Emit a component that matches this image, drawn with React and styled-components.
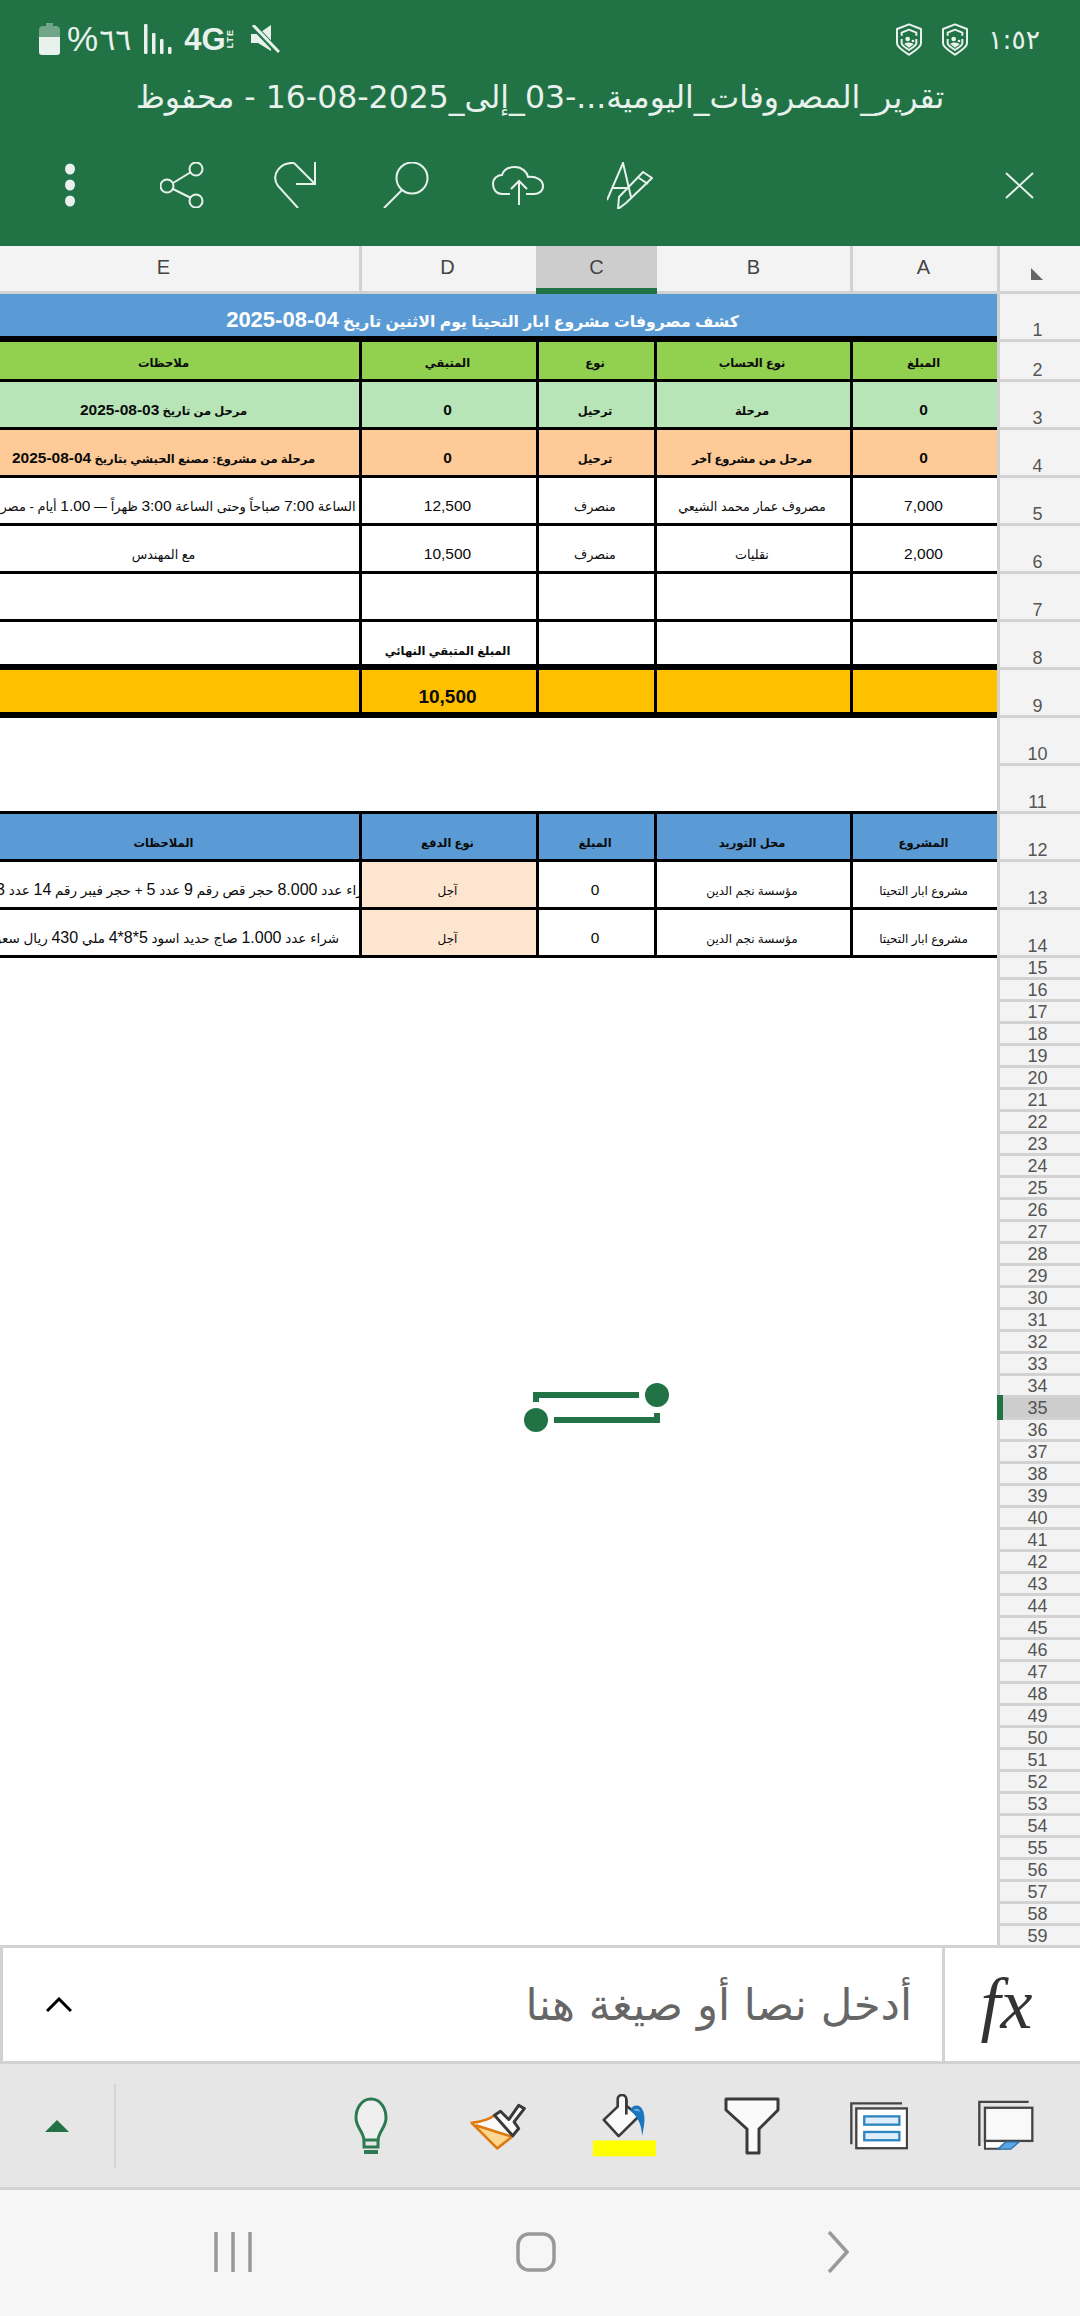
import styled, { createGlobalStyle } from "styled-components";

const GlobalStyle = createGlobalStyle`
  html, body { margin: 0; padding: 0; background: #fff; }
  * { box-sizing: border-box; }
  body { font-family: "Liberation Sans", "DejaVu Sans", sans-serif; }
`;

const GREEN = "#217346";
const LINE = "#d2d2d2";
const ICON = "#e8f1ec";

const Page = styled.div`
  width: 1080px;
  height: 2316px;
  display: flex;
  flex-direction: column;
  overflow: hidden;
  background: #fff;
`;

const Header = styled.header`
  height: 246px;
  flex: none;
  background: ${GREEN};
  color: ${ICON};
`;

const StatusBar = styled.div`
  height: 78px;
  padding: 0 40px 0 39px;
  display: flex;
  align-items: center;
  justify-content: space-between;
`;

const StatusGroup = styled.div`
  display: flex;
  align-items: center;
  gap: ${(p) => p.$gap || 0}px;
`;

const Percent = styled.span`
  font-size: 35px;
  margin-left: 7px;
`;

const ArabicDigits = styled.span`
  font-family: "DejaVu Sans", sans-serif;
  font-size: ${(p) => p.$size}px;
  direction: ltr;
  margin: 0 ${(p) => p.$mr || 0}px 0 ${(p) => p.$ml || 0}px;
`;

const Network = styled.span`
  font-weight: 700;
  font-size: 31px;
  line-height: 1;
  display: inline-flex;
  align-items: center;
  width: 50px;
  margin: 0 16px 0 12px;
`;

const Lte = styled.span`
  font-size: 9px;
  writing-mode: vertical-rl;
  transform: rotate(180deg);
  letter-spacing: 1px;
`;

const Title = styled.div`
  height: 38px;
  line-height: 38px;
  text-align: center;
  font-family: "DejaVu Sans", sans-serif;
  font-size: 31.5px;
  white-space: nowrap;
  direction: rtl;
`;

const Actions = styled.div`
  height: 138px;
  padding: 0 5px 0 14px;
  display: flex;
  align-items: center;
`;

const ActionSlot = styled.div`
  width: 112px;
  display: flex;
  justify-content: center;
  margin-left: ${(p) => (p.$push ? "auto" : "0")};
`;

const ColumnBar = styled.div`
  height: 48px;
  flex: none;
  display: grid;
  grid-template-columns: 391px 177px 121px 193px 147px 83px;
  margin-left: -32px;
  border-bottom: 3px solid ${LINE};
  background: #f3f3f3;
`;

const ColumnHead = styled.div`
  display: flex;
  align-items: center;
  justify-content: center;
  font-size: 20px;
  color: #444;
  height: 48px;
  padding-bottom: ${(p) => (p.$active ? 0 : 5)}px;
  padding-right: ${(p) => (p.$edge ? 3 : 0)}px;
  border-left: ${(p) => (p.$edge ? `3px solid ${LINE}` : "none")};
  background: ${(p) => (p.$active ? "#cdcdcd" : "transparent")};
  border-bottom: ${(p) => (p.$active ? `6px solid ${GREEN}` : "none")};
`;

const Corner = styled(ColumnHead)`
  padding: 8px 6px 0 0;
`;

const SheetArea = styled.div`
  position: relative;
  height: 1651px;
  flex: none;
  display: flex;
  overflow: hidden;
`;

const Viewport = styled.div`
  width: 997px;
  flex: none;
  overflow: hidden;
`;

const SheetGrid = styled.div`
  margin-left: -32px;
  width: 1029px;
`;

const Row = styled.div`
  display: grid;
  grid-template-columns: 391px 177px 118px 196px 147px;
  height: ${(p) => p.$h}px;
  border-bottom: ${(p) => p.$line}px solid #000;
  background: ${(p) => p.$bg || "#fff"};
`;

const Cell = styled.div`
  display: flex;
  align-items: flex-end;
  justify-content: center;
  padding-bottom: ${(p) => p.$pb || 7}px;
  padding-right: ${(p) => (p.$first ? 0 : 3)}px;
  overflow: hidden;
  white-space: nowrap;
  direction: rtl;
  line-height: 18px;
  color: #0b0b0b;
  font-size: ${(p) => p.$size}px;
  font-weight: ${(p) => (p.$bold ? 700 : 400)};
  border-left: ${(p) => (p.$first ? "none" : "3px solid #000")};
  background: ${(p) => p.$bg || "transparent"};
`;

const LongCell = styled(Cell)`
  justify-content: flex-start;
`;

const LongText = styled.span`
  margin-right: ${(p) => p.$shift}px;
`;

const Num = styled.span`
  font-size: ${(p) => p.$size}px;
`;

const Banner = styled.div`
  height: 48px;
  border-bottom: 6px solid #000;
  background: #5b9bd5;
  color: #fff;
  font-size: 15.7px;
  font-weight: 700;
  direction: rtl;
  text-align: center;
  line-height: 18px;
  padding-top: 17px;
  white-space: nowrap;
`;

const Spacer = styled.div`
  height: 96px;
  border-bottom: 3px solid #000;
`;

const Gutter = styled.div`
  flex: 1;
  background: #f3f3f3;
  border-left: 3px solid ${LINE};
`;

const RowHead = styled.div`
  height: ${(p) => p.$h}px;
  display: flex;
  align-items: flex-end;
  justify-content: center;
  padding-right: 5px;
  font-size: 18px;
  line-height: 17px;
  color: #555;
  border-bottom: 3px solid ${LINE};
  background: ${(p) => (p.$active ? "#cdcdcd" : "transparent")};
`;

const SelectionMark = styled.div`
  position: absolute;
  left: 997px;
  top: 1101px;
  width: 6px;
  height: 25px;
  background: ${GREEN};
`;

const Handles = styled.svg`
  position: absolute;
  left: 524px;
  top: 1089px;
`;

const FormulaBar = styled.div`
  height: 119px;
  flex: none;
  display: flex;
  align-items: center;
  border-top: 3px solid ${LINE};
  border-bottom: 3px solid ${LINE};
  border-left: 3px solid ${LINE};
`;

const Expand = styled.div`
  width: 112px;
  display: flex;
  justify-content: center;
`;

const Placeholder = styled.div`
  flex: 1;
  text-align: right;
  direction: rtl;
  padding-right: 30px;
  font-family: "DejaVu Sans", sans-serif;
  font-size: 43.5px;
  color: #666;
  white-space: nowrap;
`;

const FxBox = styled.div`
  width: 138px;
  height: 113px;
  display: flex;
  align-items: center;
  justify-content: center;
  padding-right: 12px;
  border-left: 3px solid ${LINE};
  font-family: "Liberation Serif", serif;
  font-style: italic;
  font-size: 72px;
  color: #333;
`;

const Ribbon = styled.div`
  height: 126px;
  flex: none;
  display: flex;
  align-items: center;
  background: #e6e6e6;
  border-bottom: 3px solid ${LINE};
`;

const Collapse = styled.div`
  width: 116px;
  height: 84px;
  display: flex;
  align-items: center;
  justify-content: center;
  border-right: 2px solid #d4d4d4;
`;

const Triangle = styled.div`
  width: 0;
  height: 0;
  border-left: 12px solid transparent;
  border-right: 12px solid transparent;
  border-bottom: 12px solid ${GREEN};
`;

const Tools = styled.div`
  flex: 1;
  display: flex;
  justify-content: flex-end;
  padding-right: 11px;
`;

const ToolSlot = styled.div`
  width: 127px;
  height: 70px;
  display: flex;
  align-items: center;
  justify-content: center;
`;

const NavBar = styled.nav`
  flex: 1;
  background: #f6f6f6;
  display: flex;
  align-items: center;
  gap: 264px;
  padding: 0 0 2px 214px;
`;

const NavChevron = styled.svg`
  margin-left: 7px;
`;

const Dots = () => (
  <svg width="12" height="44" viewBox="0 0 12 44" fill={ICON}>
    <ellipse cx="6" cy="6" rx="5" ry="5.5" />
    <ellipse cx="6" cy="22" rx="5" ry="5.5" />
    <ellipse cx="6" cy="38" rx="5" ry="5.5" />
  </svg>
);

const Stroke = ({ w, h, children, sw = 2 }) => (
  <svg width={w} height={h} viewBox={`0 0 ${w} ${h}`} fill="none" stroke={ICON} strokeWidth={sw}>
    {children}
  </svg>
);

const Battery = () => (
  <svg width="21" height="32" viewBox="0 0 21 32">
    <path d="M7 0h7v3h3a4 4 0 0 1 4 4v9H0V7a4 4 0 0 1 4-4h3z" fill={ICON} opacity="0.4" />
    <path d="M0 14h21v15a3 3 0 0 1-3 3H3a3 3 0 0 1-3-3z" fill={ICON} />
  </svg>
);

const Signal = () => (
  <svg width="28" height="30" viewBox="0 0 28 30" fill={ICON}>
    <rect x="0" y="0" width="3.5" height="30" rx="1" />
    <rect x="8" y="9" width="3.5" height="21" rx="1" />
    <rect x="16" y="15" width="3.5" height="15" rx="1" />
    <rect x="24" y="23" width="3.5" height="7" rx="1" />
  </svg>
);

const Mute = () => (
  <svg width="30" height="28" viewBox="0 0 30 28">
    <path d="M1 9h7L21 0v26L8 18H1z" fill={ICON} />
    <path d="M3 1l25 26" stroke={GREEN} strokeWidth="6" />
    <path d="M3 0l26 27" stroke={ICON} strokeWidth="3" />
  </svg>
);

const Shield = () => (
  <svg width="26" height="33" viewBox="55 25 78 97" fill="none" stroke={ICON} strokeWidth="6" strokeLinejoin="round">
    <path d="M94 28L130 42V85C130 98 105 112 94 119C83 112 58 98 58 85V42Z" />
    <path d="M72 62V53L94 44L116 53V62" />
    <path d="M72 72V85C72 92 86 99 94 105C102 99 116 92 116 85V72" />
    <circle cx="90" cy="72" r="7" fill={ICON} stroke="none" />
    <circle cx="106" cy="78" r="4" fill={ICON} stroke="none" />
    <path d="M80 87C88 80 102 82 108 88L94 98Z" fill={ICON} stroke="none" />
  </svg>
);

const Bulb = () => (
  <svg width="38" height="57" viewBox="0 0 38 57" fill="#efefef" stroke="#2b7a52" strokeWidth="3">
    <path d="M19 2C9 2 4 12 4 21c0 9 7 13 8 22h14c1-9 8-13 8-22C34 12 29 2 19 2z" />
    <path d="M12 43v7h14v-7" fill="none" />
    <path d="M12 55h14" fill="none" strokeWidth="4" />
  </svg>
);

const Brush = () => (
  <svg width="58" height="48" viewBox="40 50 175 145">
    <path d="M48 113C75 110 100 103 117 90L172 152L60 120Z" fill="#fafafa" />
    <path d="M60 120L170 155L125 190Z" fill="#fdd68f" />
    <path d="M117 90C100 103 75 110 48 113L125 190L170 155L60 120" fill="none" stroke="#dd7a10" strokeWidth="8" strokeLinejoin="round" />
    <path d="M117 90L135 78L160 103L190 60L207 70L176 110L190 130L172 152Z" fill="#fafafa" stroke="#3a3a3a" strokeWidth="9" strokeLinejoin="round" />
  </svg>
);

const Bucket = () => (
  <svg width="65" height="63" viewBox="405 30 195 190">
    <path d="M440 108L482 68V46a13 13 0 0 1 26 0V66L548 95L485 157Z" fill="#fafafa" stroke="#3a3a3a" strokeWidth="8" strokeLinejoin="round" />
    <path d="M508 46V92" stroke="#3a3a3a" strokeWidth="8" />
    <path d="M520 80C525 62 550 58 558 80C568 105 560 130 556 157C553 125 548 105 520 80Z" fill="#1b75bf" />
    <path d="M530 80C535 72 545 72 550 84C542 80 536 80 530 80Z" fill="#7db8e8" />
    <rect x="407" y="170" width="190" height="48" fill="#ffff00" />
  </svg>
);

const Funnel = () => (
  <svg width="56" height="58" viewBox="0 0 56 58" fill="#fafafa" stroke="#3a3a3a" strokeWidth="3">
    <path d="M2 2h52v11L35 32v24H23V32L2 13z" strokeLinejoin="round" />
  </svg>
);

const Panes = () => (
  <svg width="59" height="49" viewBox="28 50 178 147">
    <path d="M35 180V57H188" fill="none" stroke="#444" strokeWidth="7" />
    <rect x="50" y="72" width="153" height="120" fill="#fff" stroke="#444" strokeWidth="7" />
    <rect x="74" y="96" width="106" height="25" fill="#dfeefa" stroke="#2e86c1" strokeWidth="7" />
    <rect x="74" y="143" width="106" height="25" fill="#dfeefa" stroke="#2e86c1" strokeWidth="7" />
  </svg>
);

const Sheets = () => (
  <svg width="57" height="51" viewBox="410 45 172 153">
    <path d="M417 183V50H566" fill="none" stroke="#444" strokeWidth="7" />
    <path d="M434 168V192H480L505 168Z" fill="#fff" stroke="#444" strokeWidth="6" />
    <rect x="434" y="68" width="143" height="100" fill="#f9f9f9" stroke="#444" strokeWidth="7" />
    <path d="M472 193L497 171H537L512 193Z" fill="#5aa7e8" stroke="#2f6fa5" strokeWidth="4" />
  </svg>
);

const Mixed = ({ text, num }) =>
  text.split(/(\d[\d.,:*-]*)/).map((part, i) => (i % 2 ? <Num key={i} $size={num}>{part}</Num> : part));

const headerRows = [
  { bg: "#92d050", h: 40, cells: ["ملاحظات", "المتبقي", "نوع", "نوع الحساب", "المبلغ"], bold: true, size: 11.5, num: 15.5 },
  { bg: "#b7e5b8", h: 48, cells: ["مرحل من تاريخ 03-08-2025", "0", "ترحيل", "مرحلة", "0"], bold: true, size: 11.5, num: 15.5 },
  { bg: "#fecb98", h: 48, cells: ["مرحلة من مشروع: مصنع الحبشي بتاريخ 04-08-2025", "0", "ترحيل", "مرحل من مشروع آخر", "0"], bold: true, size: 11.5, num: 15.5 },
  { h: 48, cells: ["", "12,500", "منصرف", "مصروف عمار محمد الشيعي", "7,000"], size: 12.7, num: 15.5, long: "من الساعة 7:00 صباحاً وحتى الساعة 3:00 ظهراً — 1.00 أيام - مصروف يومي", longSize: 13, shift: -17 },
  { h: 48, cells: ["مع المهندس", "10,500", "منصرف", "نقليات", "2,000"], size: 12.7, num: 15.5 },
  { h: 48, cells: ["", "", "", "", ""], size: 12.7, num: 15.5 },
  { h: 48, line: 6, pb: 4, cells: ["", "المبلغ المتبقي النهائي", "", "", ""], bold: true, size: 11.5, num: 15.5 },
  { bg: "#ffc000", h: 48, line: 6, pb: 4, cells: ["", "10,500", "", "", ""], bold: true, size: 12, num: 19 },
];

const lowerRows = [
  { bg: "#5b9bd5", h: 48, cells: ["الملاحظات", "نوع الدفع", "المبلغ", "محل التوريد", "المشروع"], bold: true, size: 11.5, num: 15 },
  { h: 48, pay: true, cells: ["", "آجل", "0", "مؤسسة نجم الدين", "مشروع ابار التحيتا"], size: 12, num: 15.5, long: "شراء عدد 8.000 حجر قص رقم 9 عدد 5 + حجر فيبر رقم 14 عدد 3 حجر", longSize: 13.5, longNum: 16, shift: -16 },
  { h: 48, pay: true, cells: ["", "آجل", "0", "مؤسسة نجم الدين", "مشروع ابار التحيتا"], size: 12, num: 15.5, long: "شراء عدد 1.000 صاج حديد اسود  5*8*4 ملي 430 ريال سعودي", longSize: 13.5, longNum: 16, shift: 20 },
];

const SheetRow = ({ row }) => (
  <Row $h={row.h} $bg={row.bg} $line={row.line || 3}>
    {row.cells.map((text, i) =>
      i === 0 && row.long ? (
        <LongCell key={i} $first $size={row.longSize}>
          <LongText $shift={row.shift}><Mixed text={row.long} num={row.longNum || row.num} /></LongText>
        </LongCell>
      ) : (
        <Cell key={i} $first={i === 0} $bold={row.bold} $size={row.size} $pb={row.pb} $bg={row.pay && i === 1 ? "#fde5cf" : ""}>
          <span><Mixed text={text} num={row.num} /></span>
        </Cell>
      )
    )}
  </Row>
);

const rowHeads = [];
for (let n = 1; n <= 59; n++) {
  rowHeads.push({ n, h: n === 2 ? 40 : n <= 14 ? 48 : 22 });
}

export default function App() {
  return (
    <Page>
      <GlobalStyle />
      <Header>
        <StatusBar>
          <StatusGroup>
            <Battery />
            <Percent>%</Percent>
            <ArabicDigits $size={30} $mr={13} $ml={1}>٦٦</ArabicDigits>
            <Signal />
            <Network>4G<Lte>LTE</Lte></Network>
            <Mute />
          </StatusGroup>
          <StatusGroup $gap={20}>
            <Shield />
            <Shield />
            <ArabicDigits $size={26.5}>١:٥٢</ArabicDigits>
          </StatusGroup>
        </StatusBar>
        <Title>تقرير_المصروفات_اليومية...-03_إلى_2025-08-16 - محفوظ</Title>
        <Actions>
          <ActionSlot><Dots /></ActionSlot>
          <ActionSlot>
            <Stroke w={44} h={46}>
              <circle cx="36" cy="7" r="6.5" />
              <circle cx="7" cy="24" r="6.5" />
              <circle cx="36" cy="39" r="6.5" />
              <path d="M13 21l18-11M13 27l18 9" />
            </Stroke>
          </ActionSlot>
          <ActionSlot>
            <Stroke w={43} h={46}>
              <path d="M25 46L5 24C-3 12 8 0 21 1" />
              <path d="M21 1l21 21M42 0v22H23" />
            </Stroke>
          </ActionSlot>
          <ActionSlot>
            <Stroke w={46} h={46}>
              <circle cx="29" cy="16" r="15.5" />
              <path d="M19 28L1 46" />
            </Stroke>
          </ActionSlot>
          <ActionSlot>
            <Stroke w={52} h={39}>
              <path d="M18 28H10C4 28 1 23 1 18c0-6 5-9 9-9 2-6 8-8 13-8 7 0 12 5 13 10 8-1 15 3 15 9 0 5-4 8-9 8h-8" />
              <path d="M27 39V15M19 23l8-8 8 8" />
            </Stroke>
          </ActionSlot>
          <ActionSlot>
            <Stroke w={46} h={47}>
              <path d="M0 38L16 1l8 34M5 26h15" />
              <path d="M36 10l9 6L19 41l-8 6 1-12zM32 16l9 6" />
            </Stroke>
          </ActionSlot>
          <ActionSlot $push>
            <Stroke w={29} h={27}>
              <path d="M1 1l27 25M28 1L1 26" />
            </Stroke>
          </ActionSlot>
        </Actions>
      </Header>

      <ColumnBar>
        <ColumnHead>E</ColumnHead>
        <ColumnHead $edge>D</ColumnHead>
        <ColumnHead $active>C</ColumnHead>
        <ColumnHead>B</ColumnHead>
        <ColumnHead $edge>A</ColumnHead>
        <Corner $edge>
          <svg width="12" height="12" viewBox="0 0 12 12"><path d="M0 0l12 12H0z" fill="#666" /></svg>
        </Corner>
      </ColumnBar>

      <SheetArea>
        <Viewport>
          <SheetGrid>
            <Banner><Mixed text="كشف مصروفات مشروع ابار التحيتا يوم الاثنين تاريخ 04-08-2025" num={22} /></Banner>
            {headerRows.map((row, i) => <SheetRow key={i} row={row} />)}
            <Spacer />
            {lowerRows.map((row, i) => <SheetRow key={i} row={row} />)}
          </SheetGrid>
        </Viewport>
        <Gutter>
          {rowHeads.map((r) => (
            <RowHead key={r.n} $h={r.h} $active={r.n === 35}>{r.n}</RowHead>
          ))}
        </Gutter>
        <SelectionMark />
        <Handles width="145" height="49" viewBox="0 0 145 49" fill={GREEN}>
          <circle cx="133" cy="12" r="12" />
          <circle cx="12" cy="37" r="12" />
          <path d="M9 9h106v6H15v4H9z" />
          <path d="M30 34h100v-4h6v10H30z" />
        </Handles>
      </SheetArea>

      <FormulaBar>
        <Expand>
          <svg width="26" height="15" viewBox="0 0 26 15" fill="none" stroke="#000" strokeWidth="3">
            <path d="M1 14L13 2l12 12" />
          </svg>
        </Expand>
        <Placeholder>أدخل نصا أو صيغة هنا</Placeholder>
        <FxBox>fx</FxBox>
      </FormulaBar>

      <Ribbon>
        <Collapse><Triangle /></Collapse>
        <Tools>
          <ToolSlot><Bulb /></ToolSlot>
          <ToolSlot><Brush /></ToolSlot>
          <ToolSlot><Bucket /></ToolSlot>
          <ToolSlot><Funnel /></ToolSlot>
          <ToolSlot><Panes /></ToolSlot>
          <ToolSlot><Sheets /></ToolSlot>
        </Tools>
      </Ribbon>

      <NavBar>
        <svg width="38" height="40" viewBox="0 0 38 40" fill="none" stroke="#999" strokeWidth="3.5">
          <path d="M2 0v40M19 0v40M36 0v40" />
        </svg>
        <svg width="40" height="40" viewBox="0 0 40 40" fill="none" stroke="#999" strokeWidth="3.5">
          <rect x="2" y="2" width="36" height="36" rx="11" />
        </svg>
        <NavChevron width="22" height="42" viewBox="0 0 22 42" fill="none" stroke="#999" strokeWidth="3.5">
          <path d="M2 1l18 20L2 41" />
        </NavChevron>
      </NavBar>
    </Page>
  );
}
